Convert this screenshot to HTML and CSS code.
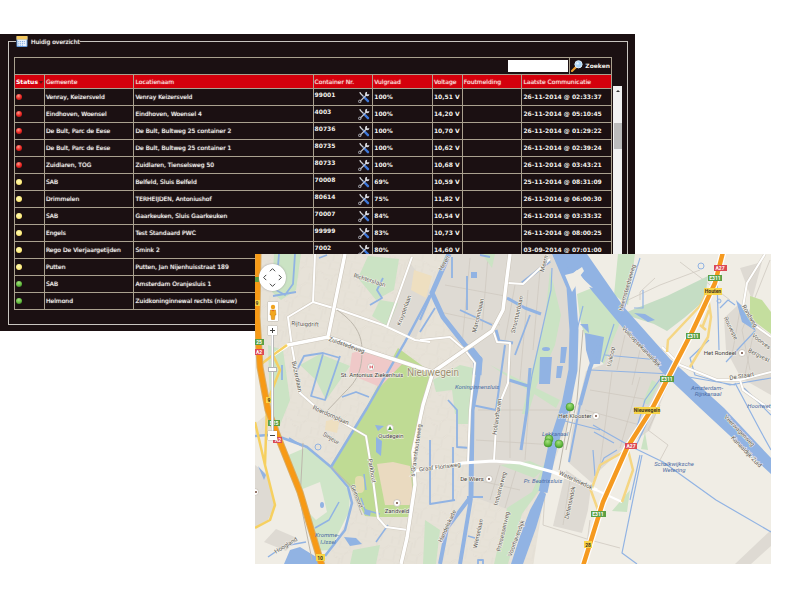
FILE: index.html
```html
<!DOCTYPE html>
<html lang="nl">
<head>
<meta charset="utf-8">
<title>Huidig overzicht</title>
<link rel="stylesheet" href="styles.css">
</head>
<body>
<svg class="defs" aria-hidden="true">
  <defs>
    <radialGradient id="red" cx=".4" cy=".3" r=".7"><stop offset="0" stop-color="#ff9a8c"/><stop offset=".6" stop-color="#f0302a"/><stop offset="1" stop-color="#c01818"/></radialGradient>
    <radialGradient id="yellow" cx=".45" cy=".4" r=".7"><stop offset="0" stop-color="#fffbb8"/><stop offset=".7" stop-color="#ffec7c"/><stop offset="1" stop-color="#e8c850"/></radialGradient>
    <radialGradient id="green" cx=".45" cy=".3" r=".7"><stop offset="0" stop-color="#a4e080"/><stop offset=".7" stop-color="#62b83c"/><stop offset="1" stop-color="#3c8c28"/></radialGradient>
    <symbol id="tools" viewBox="0 0 12 12">
      <path d="M2 2 6 6" stroke="#c9ccd2" stroke-width="1.3"/>
      <path d="M1 1 3 1.6 2.6 3Z" fill="#e4e4e8"/>
      <path d="M6 6 10 10.2" stroke="#3f78d8" stroke-width="2.4" stroke-linecap="round"/>
      <path d="M2 10.4 8.6 3.8" stroke="#c4c6cc" stroke-width="1.3"/>
      <path d="M9.2 .8A2.2 2.2 0 1 0 11.4 3L9.6 3.4 8.8 2.4Z" fill="#dcdde2"/>
      <circle cx="1.8" cy="10.4" r="1.3" fill="none" stroke="#a8aab2"/>
    </symbol>
  </defs>
</svg>
<main class="stage">
  <section class="panel">
    <fieldset class="overview">
      <legend>
        <svg class="calendar" viewBox="0 0 12 12" aria-hidden="true">
          <rect width="12" height="12" rx="1" fill="#5a94dc"/><rect width="12" height="4" fill="#f4c860"/>
          <rect x="1" y="4" width="10" height="7" fill="#eaf2fc"/>
          <path d="M2 6h8M2 8h8M2 10h5" stroke="#6c9cdc" stroke-dasharray="1 1"/>
        </svg>
        <span>Huidig overzicht</span>
      </legend>
      <form class="search">
        <input class="search-box" type="text" aria-label="Zoekterm">
        <button class="search-button" type="button">
          <svg viewBox="0 0 12 12" aria-hidden="true"><path d="M1 11 5 7" stroke="#f0a030" stroke-width="2.2" stroke-linecap="round"/><circle cx="7.5" cy="4.3" r="3.6" fill="#a8d4f8" stroke="#dcecf8"/><circle cx="6.6" cy="3.4" r="1.2" fill="#e8f6ff"/></svg>
          <span>Zoeken</span>
        </button>
      </form>
      <div class="grid">
        <table>
          <colgroup><col class="c-status"><col class="c-town"><col class="c-place"><col class="c-mid"><col class="c-mid"><col class="c-volt"><col class="c-mid"><col class="c-time"></colgroup>
          <thead><tr><th class="sorted">Status<i class="sort"></i></th><th>Gemeente</th><th>Locatienaam</th><th>Container Nr.</th><th>Vulgraad</th><th>Voltage</th><th>Foutmelding</th><th>Laatste Communicatie</th></tr></thead>
          <tbody>
            <tr><td><svg class="dot"><circle cx="3" cy="3" r="3" fill="url(#red)"/></svg></td><td>Venray, Keizersveld</td><td>Venray Keizersveld</td><td><div class="nr"><span>99001</span><svg class="tool"><use href="#tools"/></svg></div></td><td>100%</td><td>10,51 V</td><td></td><td>26-11-2014 @ 02:33:37</td></tr>
            <tr><td><svg class="dot"><circle cx="3" cy="3" r="3" fill="url(#red)"/></svg></td><td>Eindhoven, Woensel</td><td>Eindhoven, Woensel 4</td><td><div class="nr"><span>4003</span><svg class="tool"><use href="#tools"/></svg></div></td><td>100%</td><td>14,20 V</td><td></td><td>26-11-2014 @ 05:10:45</td></tr>
            <tr><td><svg class="dot"><circle cx="3" cy="3" r="3" fill="url(#red)"/></svg></td><td>De Bult, Parc de Eese</td><td>De Bult, Bultweg 25 container 2</td><td><div class="nr"><span>80736</span><svg class="tool"><use href="#tools"/></svg></div></td><td>100%</td><td>10,70 V</td><td></td><td>26-11-2014 @ 01:29:22</td></tr>
            <tr><td><svg class="dot"><circle cx="3" cy="3" r="3" fill="url(#red)"/></svg></td><td>De Bult, Parc de Eese</td><td>De Bult, Bultweg 25 container 1</td><td><div class="nr"><span>80735</span><svg class="tool"><use href="#tools"/></svg></div></td><td>100%</td><td>10,62 V</td><td></td><td>26-11-2014 @ 02:39:24</td></tr>
            <tr><td><svg class="dot"><circle cx="3" cy="3" r="3" fill="url(#red)"/></svg></td><td>Zuidlaren, TOG</td><td>Zuidlaren, Tienselsweg 50</td><td><div class="nr"><span>80733</span><svg class="tool"><use href="#tools"/></svg></div></td><td>100%</td><td>10,68 V</td><td></td><td>26-11-2014 @ 03:43:21</td></tr>
            <tr><td><svg class="dot"><circle cx="3" cy="3" r="3" fill="url(#yellow)"/></svg></td><td>SAB</td><td>Belfeld, Sluis Belfeld</td><td><div class="nr"><span>70008</span><svg class="tool"><use href="#tools"/></svg></div></td><td>69%</td><td>10,59 V</td><td></td><td>25-11-2014 @ 08:31:09</td></tr>
            <tr><td><svg class="dot"><circle cx="3" cy="3" r="3" fill="url(#yellow)"/></svg></td><td>Drimmelen</td><td>TERHEIJDEN, Antoniushof</td><td><div class="nr"><span>80614</span><svg class="tool"><use href="#tools"/></svg></div></td><td>75%</td><td>11,82 V</td><td></td><td>26-11-2014 @ 06:00:30</td></tr>
            <tr><td><svg class="dot"><circle cx="3" cy="3" r="3" fill="url(#yellow)"/></svg></td><td>SAB</td><td>Gaarkeuken, Sluis Gaarkeuken</td><td><div class="nr"><span>70007</span><svg class="tool"><use href="#tools"/></svg></div></td><td>84%</td><td>10,54 V</td><td></td><td>26-11-2014 @ 03:33:32</td></tr>
            <tr><td><svg class="dot"><circle cx="3" cy="3" r="3" fill="url(#yellow)"/></svg></td><td>Engels</td><td>Test Standaard PWC</td><td><div class="nr"><span>99999</span><svg class="tool"><use href="#tools"/></svg></div></td><td>83%</td><td>10,73 V</td><td></td><td>26-11-2014 @ 08:00:25</td></tr>
            <tr><td><svg class="dot"><circle cx="3" cy="3" r="3" fill="url(#yellow)"/></svg></td><td>Rego De Vierjaargetijden</td><td>Smink 2</td><td><div class="nr"><span>7002</span><svg class="tool"><use href="#tools"/></svg></div></td><td>80%</td><td>14,60 V</td><td></td><td>03-09-2014 @ 07:01:00</td></tr>
            <tr><td><svg class="dot"><circle cx="3" cy="3" r="3" fill="url(#yellow)"/></svg></td><td>Putten</td><td>Putten, Jan Nijenhuisstraat 189</td><td></td><td></td><td></td><td></td><td></td></tr>
            <tr><td><svg class="dot"><circle cx="3" cy="3" r="3" fill="url(#green)"/></svg></td><td>SAB</td><td>Amsterdam Oranjesluis 1</td><td></td><td></td><td></td><td></td><td></td></tr>
            <tr><td><svg class="dot"><circle cx="3" cy="3" r="3" fill="url(#green)"/></svg></td><td>Helmond</td><td>Zuidkoninginnewal rechts (nieuw)</td><td></td><td></td><td></td><td></td><td></td></tr>
          </tbody>
        </table>
        <div class="scrollbar"><i class="arrow"></i><i class="thumb"></i></div>
      </div>
    </fieldset>
  </section>

  <section class="map">
    <svg class="chart" viewBox="255 254 516 310" preserveAspectRatio="xMidYMid slice" role="img" aria-label="Nieuwegein">
      <defs>
        <pattern id="streets" width="34" height="30" patternUnits="userSpaceOnUse" patternTransform="rotate(12)">
          <path d="M0 7H14L18 3H34M0 21H9L14 17H25L34 21M6 7V0M14 7V17M25 3V17M9 21V30M27 18V30M6 30V26L0 24M20 30V24H27M4 7V14H14M25 10H34" fill="none" stroke="#d9d3c8" stroke-width="1.2"/>
          <path d="M0 7H14L18 3H34M0 21H9L14 17H25L34 21M6 7V0M14 7V17M25 3V17M9 21V30M27 18V30M6 30V26L0 24M20 30V24H27M4 7V14H14M25 10H34" fill="none" stroke="#efebe3" stroke-width=".7"/>
        </pattern>
      </defs>
      <rect x="155" y="154" width="716" height="510" fill="#e7e2d8"/>
      <rect x="155" y="154" width="716" height="510" fill="url(#streets)"/>

      <!-- open land -->
      <g fill="#f0ede5">
        <path d="M560 254H900V700H512L545 490 572 410 578 330Z"/>
        <path d="M255 434 280 438 307 446 330 467 350 492 350 515 330 552 320 564H255Z"/>
        <path d="M255 254h4l2 60-2 40 8 60-12 10Z"/>
      </g>

      <!-- business districts -->
      <g fill="#dedad3">
        <path d="M449 254H553L568 285 571 330 568 390 558 425 552 465 545 485 530 503 515 512 474 497 472 400 481 355 465 345 443 318 433 293Z"/>
        <path d="M411 264 432 294 416 338 388 327Z"/>
        <path d="M617 322 672 374 650 430 622 450 600 470 592 483 568 462 572 430 586 371 604 364Z"/>
        <path d="M566 470 591 487 588 510 582 533 553 526Z"/>
        <path d="M724 318 738 305 771 337V395L741 378 726 350Z"/>
        <path d="M740 268 762 262 752 300Z"/>
        <path d="M255 465 268 475 275 505 268 520 255 527Z"/>
        <path d="M264 542 276 529 297 538 286 551Z"/>
        <path d="M771 530V546L751 564H735Z"/>
      </g>
      <g fill="none" stroke="#cfc9c0" stroke-width=".8">
        <path d="M445 285 505 296M440 312 500 325M470 258 462 345M488 256 482 330M515 285 505 340M528 290 520 380M540 270 533 350M478 410H560M476 440 555 445M510 350V458M530 390 525 460M476 480 520 490M500 465 490 500M516 470 505 508"/>
        <path d="M590 390 650 400M585 410 640 425M625 335 617 370M640 350 632 385M612 372 600 465M640 377 620 448M570 480 563 525M740 310 732 355M755 325 745 375"/>
        <path d="M628 300 660 285 700 270M640 300V292L655 278M660 405 648 430 668 445 660 460M545 492 543 525 590 540 620 548M590 520 585 560M680 262 730 300M770 260 742 330 750 370"/>
      </g>

      <!-- parks and verges -->
      <path d="M398 348 432 373 424 404 413 450 413 500 408 517H377L365 516 352 490 331 465 366 408Z" fill="#bfdb94"/>
      <path d="M377 464 393 462 410 466 414 505H385Z" fill="#eadac0"/>
      <rect x="355" y="476" width="9" height="17" rx="4" fill="#e4dcb0"/>
      <path d="M307 447 330 467 350 492 349 512 330 550 315 551 303 510 284 457Z" fill="#cfe5c8"/>
      <path d="M300 490 320 482 327 512 316 520 302 506Z" fill="#eeebe2"/>
      <g fill="#cbe3c4">
        <path d="M274 254H301L296 290 281 300 272 292ZM268 345 283 350 290 400 278 430 270 408ZM368 256 399 259 394 290 376 300 358 278ZM380 300 398 303 388 327 372 316Z"/>
        <path d="M482 254H495L492 268ZM433 380 460 365 473 368 470 412 455 414 452 390 436 392ZM458 410H471V424H458ZM425 520 440 530 436 564H423Z"/>
        <path d="M550 270 553 282 561 315 555 345 537 385 528 414H522L532 370 545 320ZM490 365 530 385 560 400 556 408 520 385Z"/>
        <path d="M562 402 570 404 545 482 522 514 508 564H494L507 508 532 492 545 462Z"/>
        <path d="M577 294 592 288 622 318 611 345 604 364 590 352 580 320ZM618 254H635L628 305 614 295ZM652 380 659 384 648 405 643 402ZM645 432 648 450 641 449ZM630 490 627 512 612 511ZM500 465 530 461 545 468 534 478Z"/>
        <path d="M353 550 380 545 376 564H350ZM300 365 320 354 350 366 326 400 316 380Z"/>
      </g>
      <path d="M627 312 667 296 708 276 705 300 684 318 667 331 654 324 629 316Z" fill="#c5ddc4"/>
      <path d="M750 296 762 300 771 312V334L750 318Z" fill="#c4de9e"/>
      <path d="M352 353 366 349 404 362 380 387 349 374Z" fill="#efc9c8"/>
      <path d="M414 270 432 276 426 298 411 290ZM326 421 340 418 337 433 325 430Z" fill="#eedfc0"/>

      <!-- canals -->
      <g fill="#91b3e3">
        <path d="M552 254H587L623 306 670 359 724 408 771 458V474L700 408 663 373 623 328 592 291 577 270 566 280Z"/>
        <path d="M541 490 546 494 536 528 523 564H511L520 536 530 510Z"/>
        <path d="M540 357H552L550 384H539ZM561 347H567L565 363H560ZM557 366H563L561 378H556ZM471 272H477V278H471Z"/>
        <path d="M344 537 356 538 362 544 350 546ZM290 550 300 547 318 558V564H284ZM376 437 382 441 381 456 376 452ZM375 425 384 426 378 431ZM365 509 371 511 370 516 364 514ZM258 466 266 475 264 480ZM585 333 604 337 600 364H590L586 350ZM580 324 588 324 589 333Z"/>
        <path d="M634 313 645 314 655 320 648 322ZM736 300 746 310 756 331 742 322Z"/>
        <ellipse cx="546" cy="349" rx="4" ry="2"/><ellipse cx="322" cy="505" rx="2" ry="3"/>
      </g>
      <g fill="none" stroke="#91b3e3" stroke-linejoin="round">
        <path stroke-width="9" d="M557 254 571 287 574 330 573 370 566 405 553 445 543 492"/>
        <path stroke-width="5" d="M449 254 432 293 443 317 465 345 480 359 477 383 472 410 471 498"/>
        <path stroke-width="9" d="M470 350 478 360 477 375"/>
        <path stroke-width="4" d="M472 495 447 528 440 564M471 498 460 564"/>
        <path stroke-width="2.5" d="M430 295 405 342 367 408 331 467M331 467 307 447 280 437 268 435 255 436M331 467 348 487 352 503 345 530 325 556"/>
        <path stroke-width="4" d="M599 345 590 368 580 405"/>
        <path stroke-width="2" d="M580 405 569 462M432 293 420 320M505 345 496 410 472 405"/>
        <path stroke-width="3" d="M522 283 550 261M507 298 525 308 541 314M509 380 528 386M496 330 499 341 513 343M530 368 527 410 521 450"/>
        <path stroke-width="1.8" d="M279 254 276 290 285 295 293 284 295 254M273 296 296 292M370 305 382 298 377 290 383 278M297 370 304 356 323 353 340 358M323 354 311 396 325 400 334 374 340 356M282 365V380M342 397 356 392 369 397M435 308 420 332M467 276V310M452 257V278M460 310 492 325M480 255 490 257M448 400 457 410V447L470 448M430 440V504L455 500M453 447V500M530 315 515 355M467 497H483M468 536 475 538M478 564V560H483V564"/>
        <path stroke-width="1.2" d="M552 268 551 290 532 375 525 420M593 425 630 446 663 462 716 500 771 532M642 455 622 553 637 564M590 370 672 374 700 379 735 385M663 375 645 400 632 444M672 377 650 416 635 448M594 432 614 443M605 355 670 361M614 324 602 362M709 340 690 358 695 375 730 385 771 378M717 278 719 350M720 308 728 300 735 305M726 362 755 331M735 383 760 430 771 450M744 388 771 415M596 476 604 458 617 450M640 455 630 500M565 421 600 430M593 450 595 476M634 308H643V290M583 306 577 330M640 258 620 322"/>
        <path stroke-width="1.5" d="M315 528 329 520 339 502M268 557 284 546 306 542M312 564 320 549M388 525 376 542M361 498 365 510 380 514M289 438 302 446M319 258 327 255M364 474 366 490"/>
        <circle cx="318" cy="447" r="3"/><circle cx="701" cy="266" r="3" stroke-width="1"/><circle cx="719" cy="301" r="2"/>
      </g>
      <path d="M565 275 573 273 582 267 584 271 580 276 593 288 577 284 572 292Z" fill="#f0ede5"/>

      <!-- local and main roads -->
      <g fill="none" stroke-linejoin="round">
        <g stroke="#c9c2b6" stroke-width="3" opacity=".7">
          <path d="M315 254 313 302 288 317 292 347 300 393 317 408 347 425 366 436 372 472 378 518 386 527 408 530M313 302 340 310 383 325 415 340 430 342M412 257 387 327"/>
          <path d="M420 340 450 337 465 350 475 363 470 410 468 462M507 283 523 284 550 259M493 330 497 342 510 343 508 383 497 410 494 460M765 254 747 283 743 307 757 327 771 337M662 347 680 365 717 380 740 380 771 372M740 380 743 390 771 410"/>
        </g>
        <g stroke="#fff" stroke-width="2">
          <path d="M315 254 313 302 288 317 292 347 300 393 317 408 347 425 366 436 372 472 378 518 386 527 408 530M313 302 340 310 383 325 415 340 430 342M412 257 387 327"/>
          <path d="M420 340 450 337 465 350 475 363 470 410 468 462M507 283 523 284 550 259M493 330 497 342 510 343 508 383 497 410 494 460M765 254 747 283 743 307 757 327 771 337M662 347 680 365 717 380 740 380 771 372M740 380 743 390 771 410M592 488 622 502"/>
        </g>
        <path stroke="#bdb7ac" stroke-width="1" d="M337 310C355 322 362 335 362 350S360 378 346 391L326 412M570 410 559 470M583 330 577 400 566 450M303 443 300 500 312 560M331 467 350 485 362 515"/>
        <g>
          <path stroke="#cbc4b8" stroke-width="4.6" d="M345 254 328 337 288 345M328 337 365 350 433 372 492 331 503 310 507 277 510 254M433 372 423 405 413 452 415 485 407 538 401 564"/>
          <path stroke="#fff" stroke-width="3.5" d="M345 254 328 337 288 345 273 355M328 337 365 350 433 372 492 331 503 310 507 277 510 254M433 372 423 405 413 452 415 485 407 538 401 564"/>
          <path stroke="#fff" stroke-width="3" d="M415 471 463 463 493 461 520 463 553 472 597 490"/>
        </g>
        <g stroke="#f5d683" stroke-width="2.5">
          <path d="M287 345 273 355 260 365M273 355 280 370 268 400M255 422 265 465 275 505 270 520 255 528M267 405 265 465" stroke="#f6d060"/>
          <path d="M667 352 668 340 700 306 708 290M690 367 708 337 711 317 707 290M700 325 706 330M592 488 600 465 627 450M628 450 633 470 622 502M590 488 598 510M709 310 702 328"/>
        </g>
      </g>

      <!-- motorways -->
      <g fill="none" stroke-linejoin="round">
        <path stroke="#d9ab62" stroke-width="7" d="M258 254 257 317 260 367 268 410 280 442 300 492 322 566"/>
        <path stroke="#f79a16" stroke-width="5" d="M258 254 257 317 260 367 268 410 280 442 300 492 322 566"/>
        <path stroke="#fff" stroke-width="7" d="M723 252 715 283 693 330 653 407 627 448 603 502 583 566"/>
        <path stroke="#f59a20" stroke-width="4.5" d="M723 252 715 283 693 330 653 407 627 448 603 502 583 566"/>
      </g>

      <!-- road shields -->
      <g class="shield">
        <g fill="#5ba044"><rect x="255" y="339" width="9" height="6"/><rect x="268" y="420" width="12" height="6"/><rect x="708" y="275" width="14" height="6"/><rect x="686" y="333" width="14" height="6"/><rect x="660" y="376" width="14" height="6"/><rect x="591" y="511" width="15" height="6"/><rect x="255" y="277" width="4" height="5"/></g>
        <g fill="#dc4a55"><rect x="255" y="349" width="9" height="6"/><rect x="273" y="437" width="9" height="6"/><rect x="714" y="265" width="13" height="6"/><rect x="625" y="443" width="12" height="6"/></g>
        <g fill="#f8d448"><rect x="704" y="288" width="18" height="7"/><rect x="634" y="407" width="26" height="7"/><rect x="316" y="554" width="9" height="7"/><rect x="584" y="541" width="8" height="7"/><rect x="255" y="300" width="5" height="6"/><rect x="266" y="397" width="6" height="6"/></g>
        <g class="light"><text x="259" y="344">25</text><text x="274" y="425">E25</text><text x="715" y="280">E311</text><text x="693" y="338">E311</text><text x="667" y="381">E311</text><text x="598" y="516">E311</text><text x="259" y="354">A2</text><text x="278" y="442">A2</text><text x="720" y="270">A27</text><text x="631" y="448">A27</text></g>
        <text x="713" y="293">Houten</text><text x="647" y="412">Nieuwegein</text><text x="320" y="560">10</text><text x="588" y="547">28</text><text x="257" y="305">9</text><text x="269" y="402">9</text>
      </g>

      <!-- place markers -->
      <g fill="#fff" stroke="#c4beb4" stroke-width=".8"><circle cx="371" cy="367" r="3.5"/><circle cx="390" cy="428" r="3.5"/><circle cx="397" cy="503" r="3.5"/><circle cx="489" cy="479" r="3.5"/><circle cx="596" cy="416" r="3.5"/><circle cx="742" cy="353" r="3.5"/><circle cx="255" cy="492" r="3.5"/></g>
      <g fill="#704838"><circle cx="397" cy="503" r="1"/><circle cx="489" cy="479" r="1"/><circle cx="596" cy="416" r="1"/><circle cx="742" cy="353" r="1"/><circle cx="256" cy="492" r="1"/></g>
      <path d="M390 426 392 430H388Z" fill="#4c9c30"/>
      <path d="M370 365.5V368.5M372.5 365.5V368.5M370 367H372.5" stroke="#d04850" stroke-width=".8"/>

      <!-- place names -->
      <g class="names">
        <text x="372" y="377">St. Antonius Ziekenhuis</text><text x="391" y="438">Oudegein</text><text x="397" y="513">Zandveld</text><text x="472" y="481">De Wiers</text><text x="575" y="418">Het Klooster</text><text x="720" y="355">Het Rondeel</text>
        <text class="town" x="433" y="376">Nieuwegein</text>
      </g>
      <g class="roads">
        <text transform="translate(369 282) rotate(17)">Richterslaan</text>
        <text transform="translate(406 311) rotate(-70)">Kruyderlaan</text>
        <text transform="translate(305 326) rotate(3)">Rijtuigdrift</text>
        <text transform="translate(346 347) rotate(20)">Zuidstedeweg</text>
        <text transform="translate(295 377) rotate(78)">Buizerdlaan</text>
        <text transform="translate(330 417) rotate(24)">Roerdomplaan</text>
        <text transform="translate(330 440) rotate(32)">Sinjeur</text>
        <text transform="translate(370 471) rotate(80)">Parkhout</text>
        <text transform="translate(355 497) rotate(68)">Geinoord</text>
        <text transform="translate(418 451) rotate(-82)">'s-Gravenhoutseweg</text>
        <text transform="translate(440 469) rotate(-7)">Graaf Florisweg</text>
        <text transform="translate(287 547) rotate(-32)">Hoogland</text>
        <text transform="translate(446 264) rotate(-60)">Heren</text>
        <text transform="translate(480 316) rotate(-77)">Marconibaan</text>
        <text transform="translate(519 315) rotate(-77)">Structuurbaan</text>
        <text transform="translate(546 264) rotate(-75)">Meern</text>
        <text transform="translate(499 417) rotate(-82)">Hollandhaven</text>
        <text transform="translate(502 489) rotate(-75)">Industrieweg</text>
        <text transform="translate(449 527) rotate(-65)">Handelskade</text>
        <text transform="translate(480 534) rotate(-78)">Wierselaan</text>
        <text transform="translate(505 532) rotate(-77)">Prinsessenweg</text>
        <text transform="translate(518 539) rotate(-70)">Voorhavendijk</text>
        <text transform="translate(575 482) rotate(25)">Waterliniedok</text>
        <text transform="translate(572 503) rotate(-78)">Defensiedok</text>
        <text transform="translate(629 288) rotate(-74)">Heemsteedseweg</text>
        <text transform="translate(640 348) rotate(46)">Vuilcopsekanaaldijk</text>
        <text transform="translate(613 357) rotate(-78)">Vuilcop</text>
        <text transform="translate(748 317) rotate(60)">Rondweg</text>
        <text transform="translate(729 329) rotate(65)">Rouveste</text>
        <text transform="translate(760 343) rotate(38)">Voorves</text>
        <text transform="translate(758 357) rotate(27)">Bergvest</text>
        <text transform="translate(742 378) rotate(-9)">De Staart</text>
        <text transform="translate(738 432) rotate(46)">Veerwagenweg</text>
        <text transform="translate(745 453) rotate(46)">Kanaaldijk-Zuid</text>
      </g>
      <g class="waters">
        <text x="477" y="389">Koninginnensluis</text><text x="555" y="436">Lekkanaal</text><text x="543" y="483">Pr. Beatrixsluis</text>
        <text x="707" y="390">Amsterdam-</text><text x="708" y="396">Rijnkanaal</text><text x="674" y="466">Schalkwijksche</text><text x="674" y="472">Wetering</text><text x="759" y="408">Hoonwet</text>
        <text x="327" y="537">Kromme-</text><text x="328" y="544">IJssel</text>
      </g>

      <!-- container pins -->
      <g fill="url(#green)" stroke="#4a9a34" stroke-width=".6"><circle cx="570" cy="407" r="4"/><circle cx="549" cy="439" r="4"/><circle cx="548" cy="443" r="4"/><circle cx="559" cy="444" r="4"/></g>
    </svg>

    <div class="controls">
      <div class="pan">
        <button class="up" type="button" aria-label="Omhoog"><svg viewBox="0 0 8 8"><path d="M1 6 4 3 7 6"/></svg></button>
        <button class="left" type="button" aria-label="Links"><svg viewBox="0 0 8 8"><path d="M6 1 3 4 6 7"/></svg></button>
        <button class="right" type="button" aria-label="Rechts"><svg viewBox="0 0 8 8"><path d="M2 1 5 4 2 7"/></svg></button>
        <button class="down" type="button" aria-label="Omlaag"><svg viewBox="0 0 8 8"><path d="M1 2 4 5 7 2"/></svg></button>
      </div>
      <button class="pegman" type="button" aria-label="Street View"><svg viewBox="0 0 8 16"><circle cx="4" cy="3" r="2.2" fill="#f0a420"/><path d="M1.5 6H6.5L7 11H6L5.5 15.5H2.5L2 11H1Z" fill="#f2a61c" stroke="#c47c10" stroke-width=".5"/><path d="M3 6 4 7.5 5 6Z" fill="#d85028"/></svg></button>
      <button class="zoom" type="button" aria-label="Inzoomen"><svg viewBox="0 0 9 9"><path d="M2 4.500H7M4.500 2V7"/></svg></button>
      <input class="slider" type="range" min="0" max="20" value="13" aria-label="Zoomniveau">
      <button class="zoom" type="button" aria-label="Uitzoomen"><svg viewBox="0 0 9 9"><path d="M2 4.500H7"/></svg></button>
    </div>
  </section>
</main>
</body>
</html>
```
FILE: styles.css
```css
* { box-sizing: border-box; }

body {
  margin: 0;
  background: #fff;
  font-family: "DejaVu Sans", sans-serif;
}

.defs { position: absolute; width: 0; height: 0; }

.stage {
  position: relative;
  padding-top: 34px;
  min-height: 600px;
}

/* container overview */
.panel {
  margin-right: 165px;
  padding: 2px 7px 6px 8px;
  background: #1b1012;
  color: #f2f0ec;
  font-size: 6px;
  line-height: 8px;
}

.overview {
  margin: 0;
  padding: 10px 5px 14px;
  border: 1px solid #c9c5c0;
  min-width: 0;
}

.overview legend {
  display: flex;
  align-items: center;
  gap: 3px;
  margin-left: 2px;
  padding: 0;
  height: 11px;
  text-shadow: 0 0 1px currentColor;
}

.calendar { width: 12px; height: 11px; }

.search {
  display: flex;
  justify-content: flex-end;
  align-items: stretch;
  height: 17px;
  margin-right: 10px;
  border: 1px solid #aaa18f;
  border-bottom: 0;
}

.search-box {
  width: 60px;
  margin: 2px 1px;
  padding: 0 2px;
  border: 0;
  background: #fff;
  font: inherit;
}

.search-button {
  display: flex;
  align-items: center;
  gap: 2px;
  padding: 0 1px;
  border: 0;
  border-left: 1px solid #aaa18f;
  background: none;
  color: inherit;
  font: inherit;
  font-weight: bold;
}

.search-button svg { width: 12px; height: 12px; }

.grid { display: flex; }

table {
  flex: 1;
  table-layout: fixed;
  border-collapse: collapse;
  text-shadow: 0 0 1px currentColor;
}

.c-status { width: 5%; }
.c-town { width: 15%; }
.c-place { width: 30%; }
.c-mid { width: 10%; }
.c-volt { width: 5%; }
.c-time { width: 15%; }

th, td {
  height: 17px;
  padding: 0 1px;
  border: 1px solid #aaa18f;
  text-align: left;
  vertical-align: middle;
  white-space: nowrap;
}

th {
  height: 14px;
  background: #d4000c;
  color: #f8dcd8;
  font-weight: normal;
}

.sorted { color: #fff; font-weight: bold; text-shadow: none; }

/* figures are set bold, names regular */
td:nth-child(n + 4) { font-weight: bold; text-shadow: none; }

.sort {
  display: inline-block;
  margin-left: 1px;
  border: 2px solid transparent;
  border-top: 3px solid #5c1014;
  border-bottom: 0;
}

.dot { display: block; width: 6px; height: 6px; }

.nr {
  display: flex;
  justify-content: space-between;
  align-items: flex-start;
}

.tool { width: 12px; height: 12px; margin-right: 1px; }

.scrollbar {
  display: flex;
  flex-direction: column;
  align-items: center;
  flex: none;
  width: 9px;
  margin: 12px 0 0 1px;
  background: #f2f2f2;
}

.arrow {
  margin-top: 4px;
  border: 2px solid transparent;
  border-top: 0;
  border-bottom: 2px solid #333;
}

.thumb {
  width: 8px;
  height: 26px;
  margin-top: 31px;
  background: #bcbcbc;
}

/* map */
.map {
  position: absolute;
  top: 254px;
  left: 255px;
  right: 29px;
  height: 310px;
  overflow: hidden;
}

.chart { display: block; width: 100%; height: 100%; }

.chart text { font-family: Roboto, sans-serif; text-anchor: middle; }
.shield text { font-size: 5px; font-weight: bold; fill: #3c3420; }
.shield .light text { fill: #fff; }
.names text, .roads text, .waters text {
  font-size: 6px;
  fill: #444240;
  stroke: #f6f4ee;
  stroke-width: 1px;
  paint-order: stroke;
}
.names .town { font-size: 10px; fill: #9a8e70; }
.roads text { fill: #5c5852; }
.waters text { font-style: italic; fill: #4c6ca4; stroke: none; }

.controls {
  position: absolute;
  top: 10px;
  left: 4px;
  display: flex;
  flex-direction: column;
  align-items: center;
}

.controls button {
  display: grid;
  place-items: center;
  padding: 0;
  border: 0;
  background: #fff;
}

.controls path { vector-effect: non-scaling-stroke; }

.pan {
  display: grid;
  grid-template-columns: repeat(3, 8px);
  grid-template-rows: repeat(3, 8px);
  place-content: center;
  width: 27px;
  height: 27px;
  border-radius: 50%;
  background: #fff;
  box-shadow: 0 0 2px #999;
}

.pan svg { width: 7px; height: 7px; }
.pan path, .zoom path { fill: none; stroke: #444; stroke-width: 1px; }
.up { grid-area: 1 / 2; }
.left { grid-area: 2 / 1; }
.right { grid-area: 2 / 3; }
.down { grid-area: 3 / 2; }

.controls .pegman {
  width: 10px;
  height: 19px;
  margin-top: 11px;
  box-shadow: 0 0 1px #777;
}

.pegman svg { width: 8px; height: 16px; }

.controls .zoom {
  width: 9px;
  height: 9px;
  box-shadow: 0 0 1px #777;
}

.pegman + .zoom { margin-top: 5px; }
.zoom svg { width: 9px; height: 9px; }

.slider {
  appearance: none;
  writing-mode: vertical-lr;
  direction: rtl;
  width: 9px;
  height: 96px;
  margin: 0;
  background: linear-gradient(to right, transparent 3px, #b8b8b8 3px, #fff 4px, #fff 5px, #b8b8b8 5px, #b8b8b8 6px, transparent 6px);
}

.slider::-webkit-slider-thumb {
  appearance: none;
  width: 9px;
  height: 5px;
  border: 1px solid #b4b4b4;
  background: #fff;
}
```
